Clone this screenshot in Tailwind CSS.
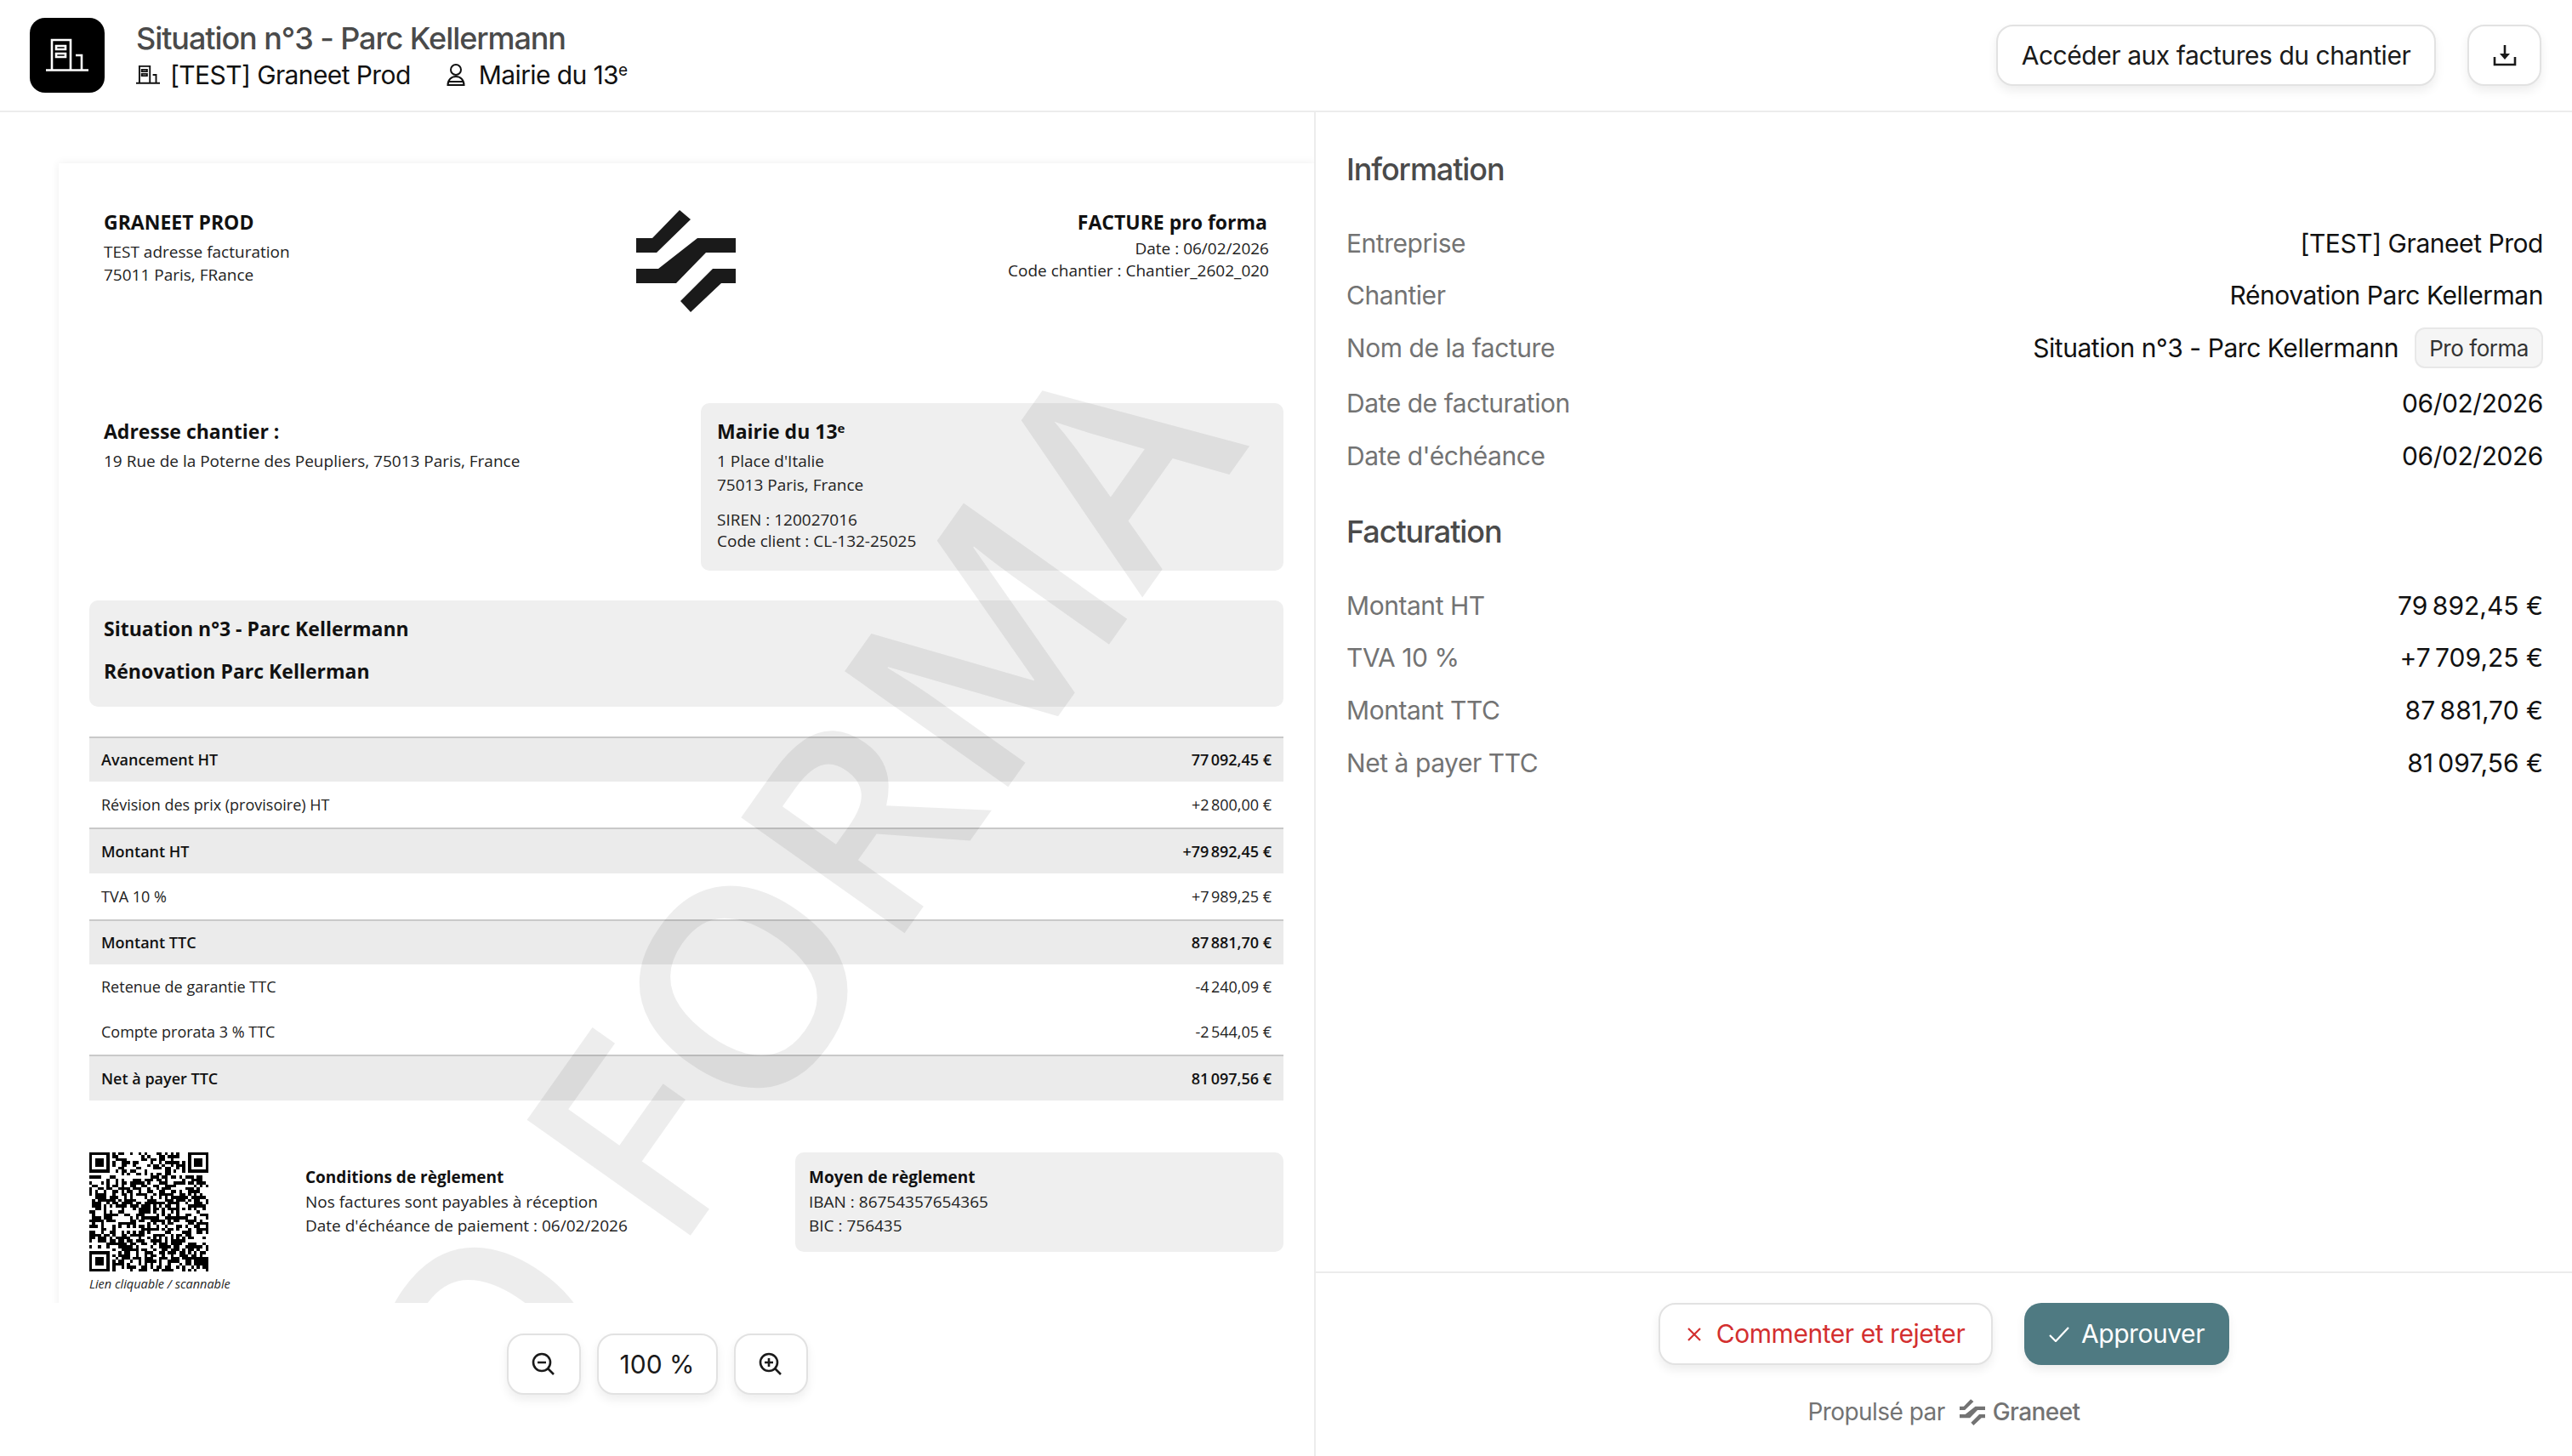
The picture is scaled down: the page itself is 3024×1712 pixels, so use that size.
<!DOCTYPE html>
<html lang="fr">
<head>
  <meta charset="UTF-8">
  <title>Situation n°3 - Parc Kellermann</title>
  <script src="https://cdn.jsdelivr.net/npm/@tailwindcss/browser@4"></script>
</head>
<body class="bg-white w-[3024px] h-[1712px] overflow-hidden font-['Inter',sans-serif] text-[#111]">

  <!-- Header -->
  <header class="h-[132px] border-b-2 border-[#ececec] flex items-center justify-between pl-[35px] pr-[36px]">
    <div class="flex items-center">
      <div class="w-[88px] h-[88px] rounded-[18px] bg-black flex items-center justify-center">
        <svg width="50" height="40" viewBox="0 0 50 40" fill="none" stroke="#fff" stroke-width="2.6">
          <path d="M0 37.5h50M7 37V2h22v35M12 9h11v4H12zM12 18h11v4H12zM35 20h7v17" />
        </svg>
      </div>
      <div class="ml-[37px]">
        <div class="text-[36px] leading-[44px] font-medium text-[#4a4a4a] tracking-[-0.03em]">Situation n°3 - Parc Kellermann</div>
        <div class="flex items-center text-[30px] leading-[40px] mt-[1px] tracking-[-0.02em]">
          <svg width="28" height="26" viewBox="0 0 50 40" fill="none" stroke="#111" stroke-width="3.4" class="mr-[12px]">
            <path d="M0 37.5h50M7 37V2h22v35M12 9h11v4H12zM12 18h11v4H12zM35 20h7v17" />
          </svg>
          <span>[TEST] Graneet Prod</span>
          <svg width="22" height="26" viewBox="0 0 22 26" fill="none" stroke="#111" stroke-width="2" class="ml-[42px] mr-[16px]">
            <circle cx="11" cy="7" r="6" /><path d="M1.5 25h19c0-6-4-10-9.500-10S1.500 19 1.500 25zM1.500 21h19" />
          </svg>
          <span>Mairie du 13<sup class="text-[19px]">e</sup></span>
        </div>
      </div>
    </div>
    <div class="flex items-center gap-[37px]">
      <button class="h-[72px] w-[517px] rounded-[20px] border-2 border-[#e2e2e2] bg-white shadow-[0_6px_12px_rgba(0,0,0,0.07)] text-[30px] tracking-[-0.015em] text-[#1a1a1a]">Accéder aux factures du chantier</button>
      <button class="h-[72px] w-[87px] rounded-[20px] border-2 border-[#e2e2e2] bg-white shadow-[0_6px_12px_rgba(0,0,0,0.07)] flex items-center justify-center">
        <svg width="28" height="28" viewBox="0 0 28 28" fill="none" stroke="#1a1a1a" stroke-width="2.600"><path d="M2 16v9h24v-9" /><path d="M14 2v13" /><path d="M8 12h12l-6 7z" fill="#1a1a1a" stroke="none" /></svg>
      </button>
    </div>
  </header>

  <main class="flex h-[1580px]">
    <!-- Document preview -->
    <section class="w-[1547px] shrink-0 border-r-2 border-[#ececec]">
      <div class="h-[1400px] overflow-hidden pt-[60px] pl-[69px]">
        <div class="relative w-[1477px] h-[2089px] bg-white shadow-[0_0_10px_rgba(0,0,0,0.07)] pt-[54px] pl-[36px] pr-[37px] font-['Open_Sans',sans-serif] text-[19px] text-[#222]">

          <div class="grid grid-cols-3 h-[228px] px-[17px]">
            <div>
              <div class="text-[23px] leading-[30px] font-bold text-[#111]">GRANEET PROD</div>
              <div class="leading-[27px] mt-[7px]">TEST adresse facturation<br>75011 Paris, FRance</div>
            </div>
            <div class="flex justify-center">
              <svg width="117" height="121" viewBox="0 0 117 121" fill="#1a1a1a"><path d="M0 34h19L51 1l13 11-40 39H0zM0 70h26l46-36h45v17H82L47 87H0zM52 108l38-38h27v17H100l-36 34z" /></svg>
            </div>
            <div class="text-right leading-[26px]">
              <div class="text-[23px] leading-[30px] font-bold text-[#111] pr-[2px]">FACTURE pro forma</div>
              <div class="mt-[3px]">Date : 06/02/2026<br>Code chantier : Chantier_2602_020</div>
            </div>
          </div>

          <div class="flex justify-between">
            <div class="pl-[17px] pt-[18px]">
              <div class="text-[23px] leading-[30px] font-bold text-[#111]">Adresse chantier :</div>
              <div class="leading-[28px] mt-[6px]">19 Rue de la Poterne des Peupliers, 75013 Paris, France</div>
            </div>
            <div class="w-[685px] h-[197px] rounded-[10px] bg-[#efefef] pl-[19px] pt-[18px]">
              <div class="text-[23px] leading-[30px] font-bold text-[#111]">Mairie du 13<sup class="text-[15px]">e</sup></div>
              <div class="leading-[28px] mt-[6px]">1 Place d'Italie<br>75013 Paris, France</div>
              <div class="leading-[25px] mt-[15px]">SIREN : 120027016<br>Code client : CL-132-25025</div>
            </div>
          </div>

          <div class="mt-[35px] h-[125px] rounded-[10px] bg-[#efefef] pl-[17px] pt-[8px] text-[23px] leading-[50px] font-bold text-[#111]">
            <div>Situation n°3 - Parc Kellermann</div>
            <div>Rénovation Parc Kellerman</div>
          </div>

          <div class="mt-[35px] text-[18px]">
            <div class="h-[53px] px-[14px] flex items-center justify-between bg-[#ebebeb] border-t-2 border-[#c9c9c9] font-semibold text-[#111]"><span>Avancement HT</span><span>77&#8239;092,45 €</span></div>
            <div class="h-[54px] px-[14px] flex items-center justify-between"><span>Révision des prix (provisoire) HT</span><span>+2&#8239;800,00 €</span></div>
            <div class="h-[54px] px-[14px] flex items-center justify-between bg-[#ebebeb] border-t-2 border-[#c9c9c9] font-semibold text-[#111]"><span>Montant HT</span><span>+79&#8239;892,45 €</span></div>
            <div class="h-[54px] px-[14px] flex items-center justify-between"><span>TVA 10 %</span><span>+7&#8239;989,25 €</span></div>
            <div class="h-[53px] px-[14px] flex items-center justify-between bg-[#ebebeb] border-t-2 border-[#c9c9c9] font-semibold text-[#111]"><span>Montant TTC</span><span>87&#8239;881,70 €</span></div>
            <div class="h-[53px] px-[14px] flex items-center justify-between"><span>Retenue de garantie TTC</span><span>-4&#8239;240,09 €</span></div>
            <div class="h-[53px] px-[14px] flex items-center justify-between"><span>Compte prorata 3 % TTC</span><span>-2&#8239;544,05 €</span></div>
            <div class="h-[54px] px-[14px] flex items-center justify-between bg-[#ebebeb] border-t-2 border-[#c9c9c9] font-semibold text-[#111]"><span>Net à payer TTC</span><span>81&#8239;097,56 €</span></div>
          </div>

          <div class="mt-[61px] flex">
            <div class="w-[254px] shrink-0">
              <svg id="qr" width="140" height="140" viewBox="0 0 41 41" shape-rendering="crispEdges"><path id="qrPath" fill="#000" d="" /></svg>
              <div class="text-[14.500px] leading-[20px] mt-[5px] italic whitespace-nowrap">Lien cliquable / scannable</div>
            </div>
            <div class="w-[576px] shrink-0 pt-[15px] leading-[28.500px]">
              <div class="font-bold text-[#111]">Conditions de règlement</div>
              <div>Nos factures sont payables à réception</div>
              <div>Date d'échéance de paiement : 06/02/2026</div>
            </div>
            <div class="w-[574px] h-[117px] rounded-[10px] bg-[#efefef] pl-[16px] pt-[15px] leading-[28.500px]">
              <div class="font-bold text-[#111]">Moyen de règlement</div>
              <div>IBAN : 86754357654365</div>
              <div>BIC : 756435</div>
            </div>
          </div>

          <!-- PRO FORMA watermark -->
          <div class="absolute inset-0 flex items-center justify-center pointer-events-none">
            <div class="rotate-[-54.700deg] whitespace-nowrap text-[330px] leading-none font-semibold text-black/[0.07]">PRO FORMA</div>
          </div>
        </div>
      </div>

      <div class="flex justify-center items-center gap-[19px] mt-[36px] text-[30px]">
        <button class="w-[87px] h-[72px] rounded-[20px] border-2 border-[#e2e2e2] bg-white shadow-[0_6px_12px_rgba(0,0,0,0.07)] flex items-center justify-center">
          <svg width="28" height="28" viewBox="0 0 28 28" fill="none" stroke="#1a1a1a" stroke-width="2.600"><circle cx="12" cy="12" r="10" /><path d="M19 19l7 7M7 12h10" /></svg>
        </button>
        <button class="w-[142px] h-[72px] rounded-[20px] border-2 border-[#e2e2e2] bg-white shadow-[0_6px_12px_rgba(0,0,0,0.07)] text-[#1a1a1a]">100 %</button>
        <button class="w-[87px] h-[72px] rounded-[20px] border-2 border-[#e2e2e2] bg-white shadow-[0_6px_12px_rgba(0,0,0,0.07)] flex items-center justify-center">
          <svg width="28" height="28" viewBox="0 0 28 28" fill="none" stroke="#1a1a1a" stroke-width="2.600"><circle cx="12" cy="12" r="10" /><path d="M19 19l7 7M7 12h10M12 7v10" /></svg>
        </button>
      </div>
    </section>

    <!-- Details -->
    <section class="flex-1 flex flex-col">
      <div class="flex-1 pl-[36px] pr-[34px] pt-[45px] text-[30px] tracking-[-0.015em]">
        <h2 class="text-[36px] leading-[44px] font-medium text-[#4a4a4a] tracking-[-0.03em] mb-[34px]">Information</h2>
        <div class="h-[62px] flex items-center justify-between"><span class="text-[#737373]">Entreprise</span><span>[TEST] Graneet Prod</span></div>
        <div class="h-[61px] flex items-center justify-between"><span class="text-[#737373]">Chantier</span><span>Rénovation Parc Kellerman</span></div>
        <div class="h-[62px] mb-[3px] flex items-center justify-between"><span class="text-[#737373]">Nom de la facture</span>
          <span class="flex items-center gap-[19px]">Situation n°3 - Parc Kellermann
            <span class="h-[48px] px-[15px] rounded-[12px] border-2 border-[#e8e8e8] bg-[#f5f5f5] text-[26px] text-[#333] flex items-center">Pro forma</span>
          </span>
        </div>
        <div class="h-[62px] flex items-center justify-between"><span class="text-[#737373]">Date de facturation</span><span>06/02/2026</span></div>
        <div class="h-[62px] flex items-center justify-between"><span class="text-[#737373]">Date d'échéance</span><span>06/02/2026</span></div>

        <h2 class="mt-[36px] text-[36px] leading-[44px] font-medium text-[#4a4a4a] tracking-[-0.03em] mb-[34px]">Facturation</h2>
        <div class="h-[62px] flex items-center justify-between"><span class="text-[#737373]">Montant HT</span><span>79&#8239;892,45 €</span></div>
        <div class="h-[61px] flex items-center justify-between"><span class="text-[#737373]">TVA 10 %</span><span>+7&#8239;709,25 €</span></div>
        <div class="h-[62px] flex items-center justify-between"><span class="text-[#737373]">Montant TTC</span><span>87&#8239;881,70 €</span></div>
        <div class="h-[62px] flex items-center justify-between"><span class="text-[#737373]">Net à payer TTC</span><span>81&#8239;097,56 €</span></div>
      </div>

      <footer class="h-[217px] border-t-2 border-[#ececec] pt-[35px] shrink-0">
        <div class="flex justify-center gap-[37px] text-[30px] tracking-[-0.015em]">
          <button class="w-[393px] h-[73px] rounded-[20px] border-2 border-[#e2e2e2] bg-white shadow-[0_6px_12px_rgba(0,0,0,0.07)] flex items-center justify-center gap-[17px] text-[#d32f2f]">
            <svg width="18" height="18" viewBox="0 0 18 18" stroke="#d32f2f" stroke-width="2.200"><path d="M2 2l14 14M16 2L2 16" /></svg>
            Commenter et rejeter
          </button>
          <button class="w-[241px] h-[73px] rounded-[20px] bg-[#4f7a82] shadow-[0_6px_12px_rgba(0,0,0,0.07)] flex items-center justify-center gap-[14px] text-white">
            <svg width="24" height="18" viewBox="0 0 24 18" fill="none" stroke="#fff" stroke-width="2.200"><path d="M1 10l7 7L23 1" /></svg>
            Approuver
          </button>
        </div>
        <div class="mt-[38px] h-[34px] flex items-center justify-center text-[28px] text-[#737373] tracking-[-0.02em]">
          <span>Propulsé par</span>
          <svg width="30" height="31" viewBox="0 0 117 121" fill="#737373" class="ml-[17px] mr-[9px]"><path d="M0 34h19L51 1l13 11-40 39H0zM0 70h26l46-36h45v17H82L47 87H0zM52 108l38-38h27v17H100l-36 34z" /></svg>
          <span class="font-medium">Graneet</span>
        </div>
      </footer>
    </section>
  </main>

  <script>
    // QR code pattern: finder squares + seeded noise
    const size = 41;
    let seed = 20602;
    function rnd() {
      seed = (seed * 1103515245 + 12345) & 0x7fffffff;
      return (seed >> 12) % 100;
    }
    function inFinder(x, y, ox, oy) {
      return x >= ox - 1 && x <= ox + 7 && y >= oy - 1 && y <= oy + 7;
    }
    function finderCell(x, y) {
      const ring = Math.max(Math.abs(x - 3), Math.abs(y - 3));
      return ring === 3 || ring <= 1;
    }
    let d = '';
    for (let y = 0; y < size; y++) {
      for (let x = 0; x < size; x++) {
        let on;
        if (inFinder(x, y, 0, 0)) on = x < 7 && y < 7 && x >= 0 && finderCell(x, y);
        else if (inFinder(x, y, 34, 0)) on = x >= 34 && y < 7 && finderCell(x - 34, y);
        else if (inFinder(x, y, 0, 34)) on = x < 7 && y >= 34 && finderCell(x, y - 34);
        else on = rnd() < 52;
        if (on) d += 'M' + x + ' ' + y + 'h1v1h-1z';
      }
    }
    document.getElementById('qrPath').setAttribute('d', d);
  </script>
</body>
</html>
